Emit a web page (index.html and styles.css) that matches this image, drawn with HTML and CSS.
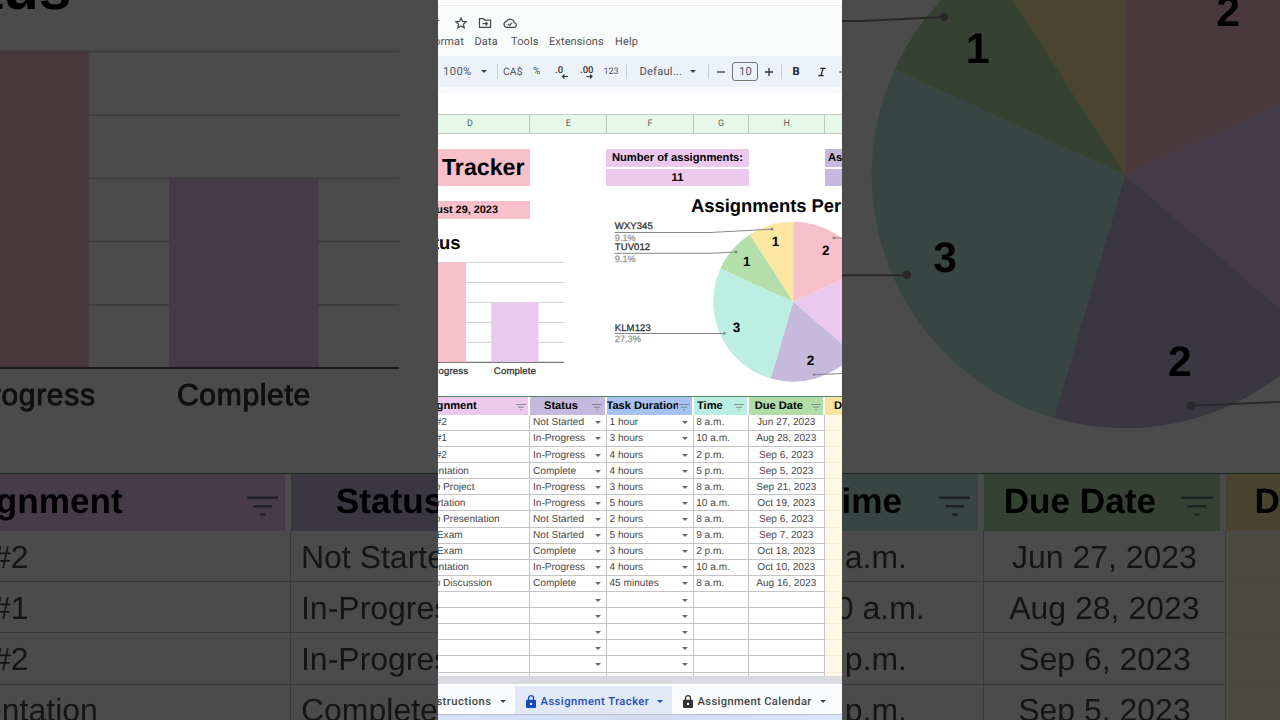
FILE: index.html
```html
<!DOCTYPE html>
<html lang="en">
<head>
<meta charset="utf-8">
<title>Assignment Tracker</title>
<link rel="stylesheet" href="styles.css">
</head>
<body>
<div class="stage">
  <div class="backdrop" aria-hidden="true"></div>
  <main class="panel">
    <header class="app-head">
      <div class="doc-icons">
        <svg class="ic-tick" viewBox="0 0 4 14"><path d="M0 4.5h1.2"/></svg>
        <svg class="ic" viewBox="0 0 24 24"><path d="M12 3.5l2.6 5.7 6.2.7-4.6 4.2 1.3 6.1L12 17.1l-5.500 3.100 1.300-6.100-4.600-4.200 6.200-.7z"/></svg>
        <svg class="ic" viewBox="0 0 24 24"><path d="M2.500 19.500v-15h7l2 2.500h10v12.500zM8 13.200h8M13 10l3.200 3.200L13 16.400"/></svg>
        <svg class="ic" viewBox="0 0 24 24"><path d="M6.500 19.500h12a4 4 0 0 0 .6-8A7 7 0 0 0 6 9.200a5.200 5.200 0 0 0 .5 10.300zM8.500 13.500l2.700 2.700 4.600-4.700"/></svg>
      </div>
      <nav class="menu"><span class="m-format">Format</span><span class="m-data">Data</span><span class="m-tools">Tools</span><span class="m-ext">Extensions</span><span>Help</span></nav>
    </header>
    <div class="toolbar">
      <span class="t-zoom">100%</span><i class="caret"></i><i class="sep s1"></i>
      <span class="t-cur">CA$</span><span class="t-pct">%</span>
      <svg class="t-dec" viewBox="0 0 16 16"><text x="0" y="9">.0</text><path d="M13 12.500H7.500M9.500 10.500l-2 2 2 2"/></svg>
      <svg class="t-dec" viewBox="0 0 16 16"><text x="0" y="9">.00</text><path d="M6.500 12.500H12M10 10.500l2 2-2 2"/></svg>
      <span class="t-num">123</span><i class="sep s2"></i>
      <span class="t-font">Defaul...</span><i class="caret"></i><i class="sep s3"></i>
      <svg class="t-op" viewBox="0 0 10 10"><path d="M1 5h8"/></svg>
      <span class="t-size">10</span>
      <svg class="t-op" viewBox="0 0 10 10"><path d="M1 5h8M5 1v8"/></svg><i class="sep s4"></i>
      <b class="t-bold">B</b>
      <svg class="t-ital" viewBox="0 0 10 12"><path d="M3 1.500h6.500M.5 10.500H7M6.300 1.500l-2.600 9"/></svg>
      <svg class="t-strike" viewBox="0 0 10 10"><path d="M0 5h10"/></svg>
    </div>
    <div class="cols colheads"><span>D</span><span>E</span><span>F</span><span>G</span><span>H</span><span></span></div>
    <section class="dash">
      <div class="dash-left">
        <h1 class="title">Assignment Tracker</h1>
        <div class="date">August 29, 2023</div>
        <svg class="bars" viewBox="438 219 168 176">
          <text class="ctitle" x="460.500" y="249" text-anchor="end">Status</text>
          <path class="gl" d="M438 262.400H564M438 282.400H564M438 302.400H564M438 322.400H564M438 342.400H564"/>
          <path class="base" d="M438 362.300H564"/>
          <rect class="pink" x="419" y="262.500" width="47" height="99.500"/>
          <rect class="lilac" x="491.300" y="302.500" width="47.200" height="59.500"/>
          <text class="lab" x="468.200" y="374.100" text-anchor="end">In-Progress</text>
          <text class="lab" x="515" y="374.100" text-anchor="middle">Complete</text>
        </svg>
      </div>
      <div class="dash-right">
        <div class="stats">
          <div class="stat"><div class="lilac-bg">Number of assignments:</div><div class="lilac-bg">11</div></div>
          <div class="stat stat-b"><div class="purple-bg">Assignments</div><div class="purple-bg"></div></div>
        </div>
        <svg class="pie" viewBox="606 187 236 208">
          <text class="ctitle" x="691" y="211.800">Assignments Per Class</text>
          <g transform="translate(793.200 301.800)">
            <path class="pink" d="M0 0V-80A80 80 0 0 1 72.800-33.200z"/>
            <path class="lilac" d="M0 0L72.800-33.200A80 80 0 0 1 60.500 52.400z"/>
            <path class="purple" d="M0 0L60.500 52.400A80 80 0 0 1-22.500 76.800z"/>
            <path class="mint" d="M0 0L-22.500 76.800A80 80 0 0 1-72.800-33.200z"/>
            <path class="green" d="M0 0L-72.800-33.200A80 80 0 0 1-43.300-67.300z"/>
            <path class="yellow" d="M0 0L-43.300-67.300A80 80 0 0 1 0-80z"/>
          </g>
          <path class="lead" d="M614.500 232.500H710L772 229.200M614.500 253.300H710L736 252M614.500 333.500H724M842 238H834M842 373.500L814 374.700"/>
          <g class="dots"><circle cx="772" cy="229.200" r="1.400"/><circle cx="736" cy="252" r="1.400"/><circle cx="724.300" cy="333.400" r="1.400"/><circle cx="834" cy="237.900" r="1.400"/><circle cx="814" cy="374.700" r="1.400"/></g>
          <g class="num"><text x="825.700" y="254.800">2</text><text x="775.500" y="246.300">1</text><text x="746.700" y="266.400">1</text><text x="736.400" y="332.400">3</text><text x="810.500" y="365.300">2</text></g>
          <text class="lab course" x="614.800" y="229.300">WXY345</text><text class="pct" x="614.800" y="241">9.1%</text>
          <text class="lab course" x="614.800" y="250.200">TUV012</text><text class="pct" x="614.800" y="261.800">9.1%</text>
          <text class="lab course" x="614.800" y="330.700">KLM123</text><text class="pct" x="614.800" y="342.200">27.3%</text>
        </svg>
      </div>
    </section>
    <section class="table"></section>
    <div class="scrollbar"></div>
    <footer class="tabs">
      <div class="tab tab-first"><span>Instructions</span><i class="caret"></i></div>
      <div class="tab tab-active"><svg class="lock" viewBox="0 0 10 13"><path class="fill" d="M1 4.800h8a1 1 0 0 1 1 1V12a1 1 0 0 1-1 1H1a1 1 0 0 1-1-1V5.800a1 1 0 0 1 1-1z"/><path class="shackle" d="M2.500 5V3.200a2.500 2.500 0 0 1 5 0V5"/><circle cx="5" cy="8.900" r="1.200"/></svg><span>Assignment Tracker</span><i class="caret"></i></div>
      <div class="tab tab-last"><svg class="lock" viewBox="0 0 10 13"><path class="fill" d="M1 4.800h8a1 1 0 0 1 1 1V12a1 1 0 0 1-1 1H1a1 1 0 0 1-1-1V5.800a1 1 0 0 1 1-1z"/><path class="shackle" d="M2.500 5V3.200a2.500 2.500 0 0 1 5 0V5"/><circle cx="5" cy="8.900" r="1.200"/></svg><span>Assignment Calendar</span><i class="caret"></i></div>
    </footer>
    <div class="bottom"></div>
  </main>
</div>
<script src="app.js"></script>
</body>
</html>
```
FILE: styles.css
```css
* { box-sizing: border-box; }
body { margin: 0; background: #4b4b4b; overflow: hidden; }
svg { display: block; flex: none; }
i, b, span { flex: none; }

.stage { display: grid; width: 1280px; height: 720px; overflow: hidden; }
.stage > * { grid-area: 1 / 1; }
.stage > .panel { justify-self: center; z-index: 1; }
.stage > .panel .cell { padding-top: 2px; }
.stage > .panel .head { line-height: 18px; }

/* enlarged, dimmed copy behind the panel; parts covered by the panel or outside the view are not painted */
.backdrop { width: 1280px; height: 720px; overflow: hidden; display: flex; align-items: center; filter: brightness(.295) blur(.6px); }
.backdrop .panel { zoom: 3.1683; --line: .62px; }
.backdrop :is(.app-head, .toolbar, .colheads, .title, .date, .stats, .tabs, .course, .pct, .h2, .c2, .row:nth-child(n+6)) { visibility: hidden; }
.backdrop .pie .ctitle { visibility: hidden; }

.panel {
  --line: 1px;
  width: 404px; height: 720px; flex: none; overflow: hidden;
  display: flex; flex-direction: column;
  background: #fff; color: #444;
  font-family: "Liberation Sans", Arial, sans-serif; font-size: 10px;
  text-rendering: geometricPrecision;
}
.panel > * { flex: none; }

/* document header */
.app-head { margin-top: 5px; height: 51px; background: #f9fbfb; border-top: 1.500px solid #ececee; font-family: Roboto, sans-serif; }
.doc-icons { display: flex; align-items: center; height: 14px; margin-top: 10px; }
.ic { width: 14px; height: 14px; margin-right: 10.500px; fill: none; stroke: #444746; stroke-width: 2; }
.ic-tick { width: 4px; height: 14px; margin-right: 11.500px; fill: none; stroke: #444746; }
.menu { display: flex; margin: 4px 0 0 -10px; font-size: 11px; line-height: 16px; letter-spacing: .12px; color: #505352; }
.m-format { width: 46.500px; }
.m-data { width: 36.500px; }
.m-tools { width: 38px; }
.m-ext { width: 66px; }

.toolbar { display: flex; align-items: center; height: 37px; padding-bottom: 6px; background: linear-gradient(#edf2fa 31px, #f8fafd 31px); font-family: Roboto, sans-serif; font-size: 11.200px; letter-spacing: .15px; color: #505357; white-space: nowrap; }
.caret { display: inline-block; width: 0; height: 0; border: 3.200px solid transparent; border-top-color: #444; border-bottom: 0; }
.sep { width: 1px; height: 15px; background: #c9ced6; }
.t-zoom { width: 38px; margin-left: 5px; letter-spacing: .4px; }
.s1 { margin: 0 5px 0 10px; }
.t-cur { width: 30px; font-size: 10.300px; }
.t-pct { width: 22px; font-size: 10px; }
.t-dec { width: 16px; height: 16px; margin-right: 8.700px; fill: none; stroke: #333; stroke-width: 1.200; overflow: visible; }
.t-dec text { font: 500 9.500px Roboto, sans-serif; fill: #333; stroke: none; letter-spacing: 0; }
.t-num { width: 23px; font-size: 9px; margin-left: -1px; letter-spacing: 0; }
.s2 { margin-right: 12px; }
.t-font { width: 51px; letter-spacing: .2px; }
.s3 { margin: 0 7px 0 12px; }
.t-op { width: 10px; height: 10px; fill: none; stroke: #333; stroke-width: 1.300; }
.t-size { width: 26px; height: 19px; margin: 0 6px; border: 1px solid #747775; border-radius: 3px; text-align: center; line-height: 17px; }
.s4 { margin: 0 10px 0 7px; }
.t-bold { width: 25.500px; color: #222; }
.t-ital { width: 8px; height: 10px; fill: none; stroke: #222; stroke-width: 1.600; }
.t-strike { width: 10px; height: 10px; margin-left: 13px; stroke: #333; }

/* sheet columns */
.cols { display: grid; grid-template-columns: 120px 76.500px 87px 55px 76.500px 80px; width: 495px; margin-left: -28px; }
.colheads { height: 19.500px; margin-top: 21px; background: #e6f8ea; border-top: 1px solid #c3cdc5; border-bottom: 1px solid #c3cdc5; font-family: Roboto, sans-serif; font-size: 9px; line-height: 19px; text-align: center; color: #5a605c; }
.colheads span { border-right: 1px solid #bcc6be; padding-left: 1px; }

/* dashboard */
.dash { display: flex; height: 262.300px; padding-top: 15.700px; color: #000; font-weight: bold; }
.dash-left { width: 168px; overflow: hidden; }
.title { display: flex; justify-content: flex-end; align-items: center; width: 92px; height: 37px; margin: 0; padding: 0 5.500px 0 0; background: #f7c0ca; font-size: 23.200px; white-space: nowrap; }
.date { display: flex; justify-content: flex-end; width: 92px; height: 18px; margin-top: 15px; padding-right: 32px; background: #f7c0ca; font-size: 10.900px; line-height: 19px; white-space: nowrap; }
.bars { width: 168px; height: 176px; }
.dash-right { width: 236px; overflow: hidden; }
.stats { display: flex; height: 36.400px; margin-bottom: .6px; gap: 76px; font-size: 11.200px; text-align: center; line-height: 19px; }
.stat { display: grid; grid-template-rows: 17.500px 17px; gap: 2px; width: 143px; flex: none; white-space: nowrap; }
.stat-b { text-align: left; }
.stat-b div { padding-left: 3px; }
.lilac-bg { background: #ecc8ed; }
.purple-bg { background: #c5badd; }
.pie { width: 236px; height: 208px; margin-top: 1px; }
.pink { fill: #f7c0ca; }
.lilac { fill: #ebc8ed; }
.purple { fill: #c5b9dc; }
.mint { fill: #bdeee2; }
.green { fill: #b4dfaa; }
.yellow { fill: #fbe6a2; }
.ctitle { font-size: 18.400px; font-weight: bold; }
.gl, .base, .lead { fill: none; stroke-width: var(--line); }
.gl { stroke: #cfcfcf; }
.base { stroke: #555; }
.lead { stroke: #888; }
.dots { fill: #888; }
.lab, .pct { font-weight: normal; stroke-width: .3px; }
.lab { font-size: 9.500px; letter-spacing: .1px; fill: #333; stroke: #333; }
.bars .lab { letter-spacing: .2px; }
.pct { font-size: 9.200px; fill: #999; stroke: #999; }
.num { font-size: 13.500px; font-weight: bold; text-anchor: middle; }

/* assignment table */
.table { height: 280.500px; overflow: hidden; border-top: var(--line) solid #4f8a63; }
.head { height: 18px; font-size: 11.100px; font-weight: bold; color: #000; line-height: 17.600px; }
.hcell { position: relative; display: flex; overflow: hidden; white-space: nowrap; border-right: 2px solid #fff; }
.h0 { background: #ecc8ed; padding-left: 3.200px; }
.h1 { background: #c5badd; padding-left: 14px; }
.h2 { background: #a6c3f3; }
.h3 { background: #bbeee3; padding-left: 3.500px; }
.h4 { background: #b2dda8; padding-left: 6.300px; }
.h5 { background: #fbe4a2; padding-left: 9px; }
.hcell span { overflow: hidden; }
.h2 span { width: 71px; }
.filter { position: absolute; right: 2.300px; top: 6px; width: 10px; height: 8px; fill: none; stroke: #6d7880; stroke-width: .8; }
.row { height: 16.110px; font-size: 10.100px; line-height: 14px; color: #484848; }
.cell { display: flex; justify-content: space-between; align-items: center; padding: .2px 4px 0 3px; border-right: var(--line) solid #c4c4c4; border-bottom: var(--line) solid #c4c4c4; white-space: nowrap; overflow: hidden; }
.cell .caret { border-width: 3px; border-bottom: 0; border-top-color: #666; margin: -1px .5px 0 0; }
.c0 { padding-left: 2.200px; }
.c3 { padding-left: 2.700px; }
.c4 { justify-content: center; padding-left: 0; padding-right: 0; }
.c5 { background: #fef9e4; border-bottom-color: #f6efd6; }

/* sheet tabs */
.scrollbar { height: 8px; background: #d9dadf; }
.tabs { display: flex; height: 30.500px; border-top: 2px solid #fff; border-bottom: 1px solid #b9bfc9; background: #f9fbfd; font: 500 11.200px Roboto, sans-serif; letter-spacing: .47px; color: #444746; white-space: nowrap; }
.tab { display: flex; align-items: center; width: 160px; padding: 2px 0 0 11px; flex: none; }
.tab .caret { margin-left: 8px; }
.tab-first { width: 77px; justify-content: flex-end; padding: 2px 9.500px 0 0; overflow: hidden; }
.tab-last { letter-spacing: .35px; }
.tab-active { width: 157px; background: #e1e9f7; color: #1f4dbd; }
.tab-active .caret { border-top-color: #1f4dbd; }
.lock { width: 10px; height: 13px; margin-right: 4.500px; color: #333; }
.tab-active .lock { color: #1548bb; }
.lock .fill { fill: currentColor; }
.lock .shackle { fill: none; stroke: currentColor; stroke-width: 1.300; }
.lock circle { fill: #fff; }
.bottom { flex: 1; background: linear-gradient(90deg, #d5e3fa, #d3dbf6 55%, #dae6fa); }
```
FILE: app.js
```js
const heads = ['Assignment', 'Status', 'Task Duration', 'Time', 'Due Date', 'Days Left'];
const rows = [
  ['Quiz #2', 'Not Started', '1 hour', '8 a.m.', 'Jun 27, 2023'],
  ['Quiz #1', 'In-Progress', '3 hours', '10 a.m.', 'Aug 28, 2023'],
  ['Quiz #2', 'In-Progress', '4 hours', '2 p.m.', 'Sep 6, 2023'],
  ['Presentation', 'Complete', '4 hours', '5 p.m.', 'Sep 5, 2023'],
  ['Group Project', 'In-Progress', '3 hours', '8 a.m.', 'Sep 21, 2023'],
  ['Dissertation', 'In-Progress', '5 hours', '10 a.m.', 'Oct 19, 2023'],
  ['Group Presentation', 'Not Started', '2 hours', '8 a.m.', 'Sep 6, 2023'],
  ['Final Exam', 'Not Started', '5 hours', '9 a.m.', 'Sep 7, 2023'],
  ['Final Exam', 'Complete', '3 hours', '2 p.m.', 'Oct 18, 2023'],
  ['Presentation', 'In-Progress', '4 hours', '10 a.m.', 'Oct 10, 2023'],
  ['Group Discussion', 'Complete', '45 minutes', '8 a.m.', 'Aug 16, 2023'],
];
while (rows.length < 17) rows.push(['', '', '', '', '']);

const filter = '<svg class="filter" viewBox="0 0 10 8"><path d="M0 1.500h10M2 4.200h6M4.200 6.800h1.600"/></svg>';
const head = heads.map((h, i) => `<div class="hcell h${i}"><span>${h}</span>${i < 5 ? filter : ''}</div>`).join('');
const body = rows.map(r => '<div class="cols row">' + [...r, ''].map((t, i) =>
  `<div class="cell c${i}"><span>${t}</span>${i === 1 || i === 2 ? '<i class="caret"></i>' : ''}</div>`).join('') + '</div>').join('');

const panel = document.querySelector('.panel');
panel.querySelector('.table').innerHTML = `<div class="cols head">${head}</div>${body}`;

// The enlarged, dimmed copy of the sheet fills the area behind the panel.
document.querySelector('.backdrop').append(panel.cloneNode(true));
```
